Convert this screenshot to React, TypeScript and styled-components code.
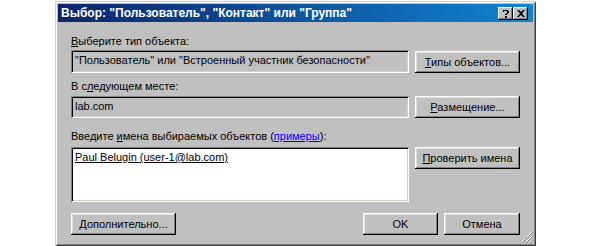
import { FunctionComponent, ReactNode } from 'react';
import styled, { createGlobalStyle } from 'styled-components';

const GlobalStyle = createGlobalStyle`
  body {
    margin: 0;
    background: #fff;
    font-family: "Liberation Sans", Arial, sans-serif;
    font-size: 11px;
  }
`;

const Window = styled.div`
  position: relative;
  margin: 1px 0 0 55px;
  width: 481px;
  height: 245px;
  box-sizing: border-box;
  padding: 3px;
  background: #c0c0c0;
  box-shadow: inset 1px 1px #d4d0c8, inset -1px -1px #404040, inset 2px 2px #fff,
    inset -2px -2px #808080;
  display: flex;
  flex-direction: column;
`;

const TitleBar = styled.div`
  height: 18px;
  display: flex;
  align-items: center;
  padding: 0 5px 0 3px;
  background: linear-gradient(to right, #0a246a, #1084d0);
  color: #fff;
  font-weight: bold;
  font-size: 12px;
`;

const Title = styled.div`
  flex: 1;
  white-space: nowrap;
`;

const TitleButton = styled.div`
  width: 15px;
  height: 13px;
  box-sizing: border-box;
  background: #c0c0c0;
  box-shadow: inset -1px -1px #000, inset 1px 1px #fff, inset -2px -2px #808080;
  display: flex;
  align-items: center;
  justify-content: center;
  color: #000;
`;

const Body = styled.div`
  flex: 1;
  padding: 13px 13px 0 13px;
  display: flex;
  flex-direction: column;
`;

const Label = styled.div<{ $gap: number }>`
  line-height: 13px;
  height: 13px;
  margin-bottom: ${(p) => p.$gap}px;
  color: #000;
  white-space: nowrap;
`;

const Row = styled.div<{ $align: string }>`
  display: grid;
  grid-template-columns: 338px 105px;
  column-gap: 6px;
  align-items: ${(p) => p.$align};
`;

const Field = styled.div<{ $h: number; $white?: boolean }>`
  height: ${(p) => p.$h}px;
  box-sizing: border-box;
  padding: 3px 4px;
  line-height: 14px;
  background: ${(p) => (p.$white ? '#fff' : '#c0c0c0')};
  box-shadow: inset 1px 1px #808080, inset -1px -1px #fff, inset 2px 2px #000,
    inset -2px -2px #d4d0c8;
  white-space: nowrap;
  overflow: hidden;
`;

const Button = styled.div<{ $w?: number }>`
  height: 22px;
  width: ${(p) => (p.$w ? `${p.$w}px` : 'auto')};
  box-sizing: border-box;
  background: #c0c0c0;
  box-shadow: inset -1px -1px #000, inset 1px 1px #fff, inset -2px -2px #808080,
    inset 2px 2px #dfdfdf;
  display: flex;
  align-items: center;
  justify-content: center;
  color: #000;
  white-space: nowrap;
`;

const Key = styled.span`
  text-decoration: underline;
`;

const Link = styled.span`
  color: #0000ff;
  text-decoration: underline;
`;

const Entry = styled.span`
  text-decoration: underline;
`;

const Spacer = styled.div<{ $h: number }>`
  height: ${(p) => p.$h}px;
`;

const Footer = styled.div`
  display: flex;
  align-items: center;
`;

const Grip = styled.svg`
  position: absolute;
  right: 3px;
  bottom: 3px;
`;

const Mark: FunctionComponent<{ children: ReactNode }> = ({ children }) => <Key>{children}</Key>;

const App: FunctionComponent = () => {
  return (
    <>
      <GlobalStyle />
      <Window>
        <TitleBar>
          <Title>Выбор: "Пользователь", "Контакт" или "Группа"</Title>
          <TitleButton>
            <svg width="7" height="9" viewBox="0 0 7 9">
              <path d="M1 1h5v1h1v2h-1v1h-1v1h-2v-1h1v-1h1v-2h-3v1h-1z M3 7h2v2h-2z" fill="#000" />
            </svg>
          </TitleButton>
          <TitleButton>
            <svg width="8" height="7" viewBox="0 0 8 7">
              <path d="M0 0h2l2 2 2-2h2l-3 3.5 3 3.5h-2l-2-2-2 2h-2l3-3.5z" fill="#000" />
            </svg>
          </TitleButton>
        </TitleBar>
        <Body>
          <Label $gap={2}>
            <Mark>В</Mark>ыберите тип объекта:
          </Label>
          <Row $align="end">
            <Field $h={23}>"Пользователь" или "Встроенный участник безопасности"</Field>
            <Button>
              <span>
                <Mark>Т</Mark>ипы объектов...
              </span>
            </Button>
          </Row>
          <Spacer $h={7} />
          <Label $gap={3}>
            В с<Mark>л</Mark>едующем месте:
          </Label>
          <Row $align="start">
            <Field $h={22}>lab.com</Field>
            <Button>
              <span>
                <Mark>Р</Mark>азмещение...
              </span>
            </Button>
          </Row>
          <Spacer $h={12} />
          <Label $gap={4}>
            Введите <Mark>и</Mark>мена выбираемых объектов (<Link>примеры</Link>):
          </Label>
          <Row $align="start">
            <Field $h={55} $white>
              <Entry>Paul Belugin (user-1@lab.com)</Entry>
            </Field>
            <Button>
              <span>
                <Mark>П</Mark>роверить имена
              </span>
            </Button>
          </Row>
          <Spacer $h={11} />
          <Footer>
            <Button $w={105}>
              <span>
                <Mark>Д</Mark>ополнительно...
              </span>
            </Button>
            <div style={{ flex: 1 }} />
            <Button $w={75}>OK</Button>
            <div style={{ width: 6 }} />
            <Button $w={76}>Отмена</Button>
          </Footer>
        </Body>
        <Grip width="12" height="12" viewBox="0 0 12 12">
          <path d="M11 1L1 11M11 5L5 11M11 9L9 11" stroke="#fff" strokeWidth="1" />
          <path d="M12 1L1 12M12 5L5 12M12 9L9 12" stroke="#808080" strokeWidth="1" />
        </Grip>
      </Window>
    </>
  );
};

export default App;
